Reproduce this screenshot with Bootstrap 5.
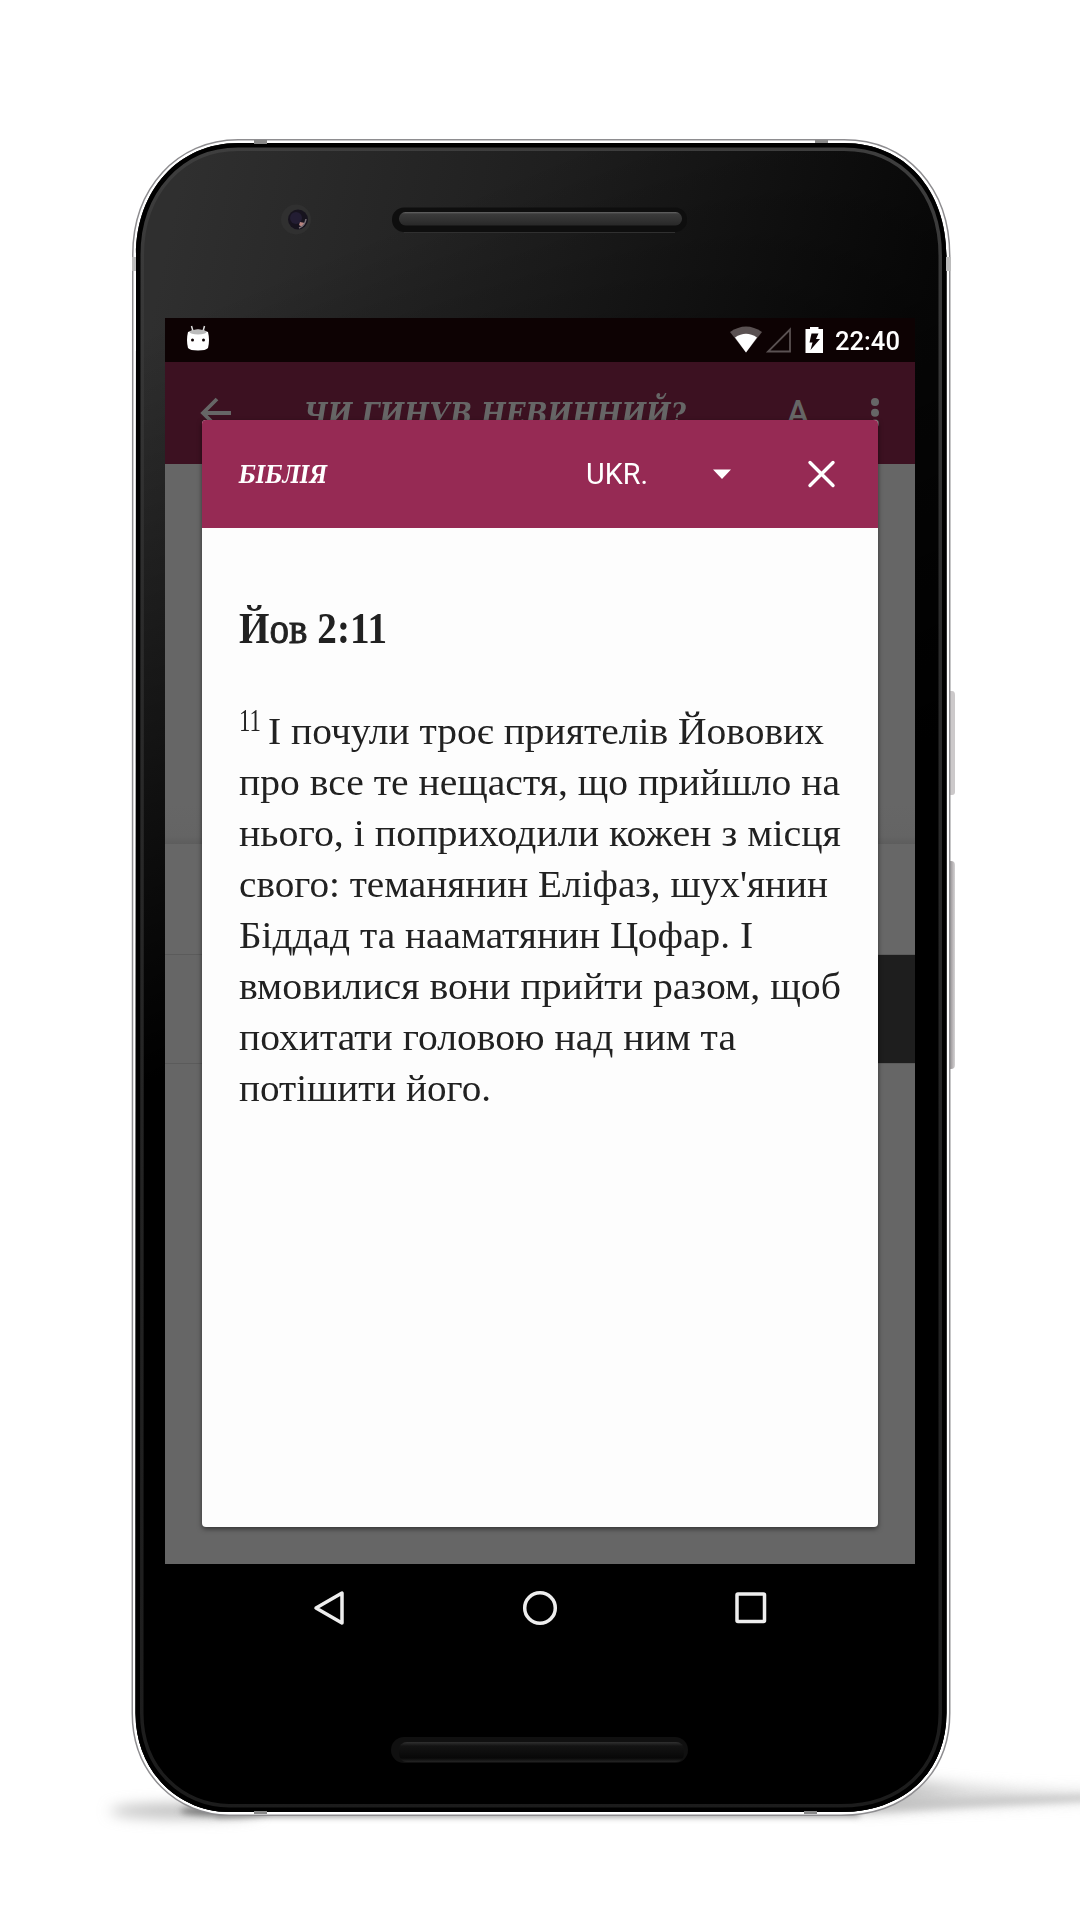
<!DOCTYPE html>
<html lang="uk">
<head>
<meta charset="utf-8">
<meta name="viewport" content="width=device-width, initial-scale=1">
<title>Біблія</title>
<link href="https://cdn.jsdelivr.net/npm/bootstrap@5.3.0/dist/css/bootstrap.min.css" rel="stylesheet">
<style>
body{background:#fff;margin:0}
.stage{width:1080px;height:1920px;padding:138px 0 0 132px}
.shell{left:0;top:0}
.phone{width:817px;height:1677px;padding:180px 34px 0 33px}
.display{width:750px;height:1246px;background:#666}
.status{height:44px;background:#0d0203;padding:1px 15px 0 21px}
.clock{font:500 26px/44px Roboto,sans-serif;color:#fff;white-space:nowrap;margin-left:10px}
.appbar{height:102px;background:#3c1121;color:#666}
.ttl{font-family:"DejaVu Serif Condensed","DejaVu Serif",serif;font-stretch:condensed;font-weight:700;font-style:italic;white-space:nowrap}
.appbar .ttl{font-size:32px;line-height:105px;width:382px;margin-left:73px}
.fmt{font:500 33px/101px Roboto,sans-serif;width:21px;margin-left:101px}
.band{height:110px}
.hero{height:380px;background:linear-gradient(#666 0,#666 340px,#646464 372px,#5d5d5d)}
.band-a{background:#676767}
.band-b{border-top:1px solid #5b5b5b;border-bottom:1px solid #5b5b5b;background:linear-gradient(90deg,#666 50%,#1e1e1e 50%)}
.popup{left:37px;top:102px;width:676px;height:1107px;background:#fdfdfd;border-radius:4px;box-shadow:0 2px 5px rgba(0,0,0,.5);overflow:hidden}
.popbar{height:108px;background:#962a54;color:#fff;padding:0 41px 0 37px}
.popbar .ttl{font-size:25px;width:87px;padding-top:2px}
.lang{font:400 29px/109px Roboto,sans-serif;width:61px;margin-left:260px;white-space:nowrap}
.reading{padding:72px 36px 0 37px;color:#212121;font-family:"Liberation Serif",serif}
.verse-title{font-size:45px;line-height:56px;margin:0 0 50px;font-weight:700;white-space:nowrap}
.verse-title .thin{font-weight:400;-webkit-text-stroke:.9px #212121}
.verse{font-size:37.5px;line-height:51px;margin:0}
.ln{display:block;height:51px;white-space:nowrap}
.num{font-size:31px;position:relative;top:-13px;line-height:1;display:inline-block;width:29px}
.fit{display:inline-block;transform-origin:0 50%}
.keys{height:88px;padding:0 148px}
</style>
<script src="https://cdn.jsdelivr.net/npm/bootstrap@5.3.0/dist/js/bootstrap.bundle.min.js"></script>
</head>
<body>
<main class="stage position-relative overflow-hidden">
<svg class="shell position-absolute" width="1080" height="1920" viewBox="0 0 1080 1920">
<defs>
<linearGradient id="face" gradientUnits="userSpaceOnUse" x1="180" y1="180" x2="930" y2="340"><stop offset="0" stop-color="#2f2f2f"/><stop offset=".5" stop-color="#1e1e1e"/><stop offset="1" stop-color="#0a0a0a"/></linearGradient>
<linearGradient id="fade" gradientUnits="userSpaceOnUse" x1="145" y1="333" x2="420" y2="963"><stop offset="0" stop-color="#000" stop-opacity="0"/><stop offset="1" stop-color="#000"/></linearGradient>
<linearGradient id="ring" x1="0" y1="0" x2="0" y2="1"><stop offset="0" stop-color="#3e3e3e"/><stop offset=".3" stop-color="#2b2b2b"/><stop offset="1" stop-color="#1c1c1c"/></linearGradient>
<linearGradient id="grille" x1="0" y1="0" x2="0" y2="1"><stop offset="0" stop-color="#666"/><stop offset=".15" stop-color="#3b3b3b"/><stop offset="1" stop-color="#282828"/></linearGradient>
<linearGradient id="grille2" x1="0" y1="0" x2="0" y2="1"><stop offset="0" stop-color="#303030"/><stop offset=".2" stop-color="#131313"/><stop offset=".8" stop-color="#080808"/><stop offset="1" stop-color="#242424"/></linearGradient>
<linearGradient id="key" x1="0" y1="0" x2="1" y2="0"><stop offset="0" stop-color="#77757a"/><stop offset=".5" stop-color="#aaa6a8"/><stop offset="1" stop-color="#d5d3d4"/></linearGradient>
<linearGradient id="cast" x1="0" y1="0" x2="1" y2="0"><stop offset="0" stop-color="#999"/><stop offset=".4" stop-color="#ccc"/><stop offset="1" stop-color="#d8d8d8"/></linearGradient>
<filter id="b6" x="-30%" y="-150%" width="160%" height="400%"><feGaussianBlur stdDeviation="7"/></filter>
<filter id="b3" x="-30%" y="-100%" width="160%" height="300%"><feGaussianBlur stdDeviation="3"/></filter>
<path id="body" d="M238 143H844C905 143 946.500 190 946.500 256V1713C946.500 1773 903 1812 841 1812H229C180 1812 135.500 1773 135.500 1713L136 255C136 190 179 143 238 143Z"/>
<clipPath id="inside"><use href="#body"/></clipPath>
</defs>
<ellipse cx="185" cy="1811" rx="75" ry="7" fill="#bbb" filter="url(#b6)"/>
<ellipse cx="225" cy="1811" rx="45" ry="5" fill="#777" filter="url(#b3)"/>
<path d="M215 1810H860V1817H215Z" fill="#999" filter="url(#b3)"/>
<path d="M860 1780C930 1775 960 1791 1120 1791V1800L860 1812Z" fill="url(#cast)" filter="url(#b6)" opacity=".7"/>
<path d="M880 1800L1120 1793V1800L860 1813Z" fill="#bbb" filter="url(#b3)" opacity=".6"/>
<path d="M948 691h4q3 0 3 4v97q0 3-3 3h-4z" fill="#ccc9ca"/>
<path d="M948 861h3q4 0 4 4v200q0 4-4 4h-3z" fill="url(#key)"/>
<use href="#body" fill="none" stroke="#8e8d90" stroke-width="8"/>
<use href="#body" fill="none" stroke="#fff" stroke-width="5"/>
<g clip-path="url(#inside)">
<use href="#body" fill="url(#face)"/>
<use href="#body" fill="url(#fade)"/>
<use href="#body" fill="none" stroke="url(#ring)" stroke-width="16"/>
<use href="#body" fill="none" stroke="#000" stroke-width="9"/>
</g>
<path d="M254 140v4h13v-4zM815 140v3h13v-3zM254 1811v3h13v-3zM804 1811v3h13v-3z" fill="#888"/>
<path d="M132 257h4v14h-4zM946 257h5v14h-5z" fill="#bbb"/>
<circle cx="296" cy="219.500" r="15" fill="#303030"/><circle cx="298" cy="219.500" r="10" fill="#17131e"/><circle cx="296" cy="218" r="6" fill="#231d33"/><path d="M300 222l5 1-3 4-3-2z" fill="#b88480"/><path d="M306 219q-1 7-7 9" stroke="#776e75" fill="none" stroke-width="1.500"/>
<rect x="392" y="207.500" width="295" height="24.500" rx="12" fill="#0e0e0e"/><path d="M404 232.500H675" stroke="#303030"/>
<rect x="399" y="212" width="283" height="13.500" rx="6.500" fill="url(#grille)"/>
<rect x="391" y="1737" width="297" height="26" rx="13" fill="#101010"/><rect x="399" y="1742" width="285" height="20" rx="8" fill="url(#grille2)"/>
</svg>

<div class="phone position-relative">
 <div class="display position-relative d-flex flex-column">
  <div class="status d-flex align-items-center">
   <svg width="24" height="44" viewBox="0 0 24 44"><path d="M5.500 7l2 7M18.500 7l-2 7" stroke="#ddd" stroke-width="1.500"/><path d="M2 13Q12 8 22 13Q24 21 22 29Q20 31.500 12 31.500Q4 31.500 2 29Q0 21 2 13Z" fill="#fff"/><ellipse cx="12" cy="13" rx="8.500" ry="2.500" fill="#bbb"/><circle cx="6.500" cy="21" r="1.500" fill="#0d0203"/><circle cx="17.500" cy="21" r="1.500" fill="#0d0203"/></svg>
   <svg class="ms-auto flex-shrink-0" width="95" height="44" viewBox="0 0 95 44"><path d="M0 13Q16 2 32 13L16 33.500Z" fill="#5a5152"/><path d="M5 18.500Q16 11 27 18.500L16 33.500Z" fill="#fff"/><path d="M60 10.500V32.500H38Z" fill="none" stroke="#5a5152" stroke-width="1.800"/><path d="M80 8h8.500v2h4.500v24h-17.500V10h4.500z" fill="#fff"/><path d="M81.500 14.500h7l-2.500 5.500h4L80.500 31l2-7.500h-3z" fill="#0d0203"/></svg>
   <span class="clock flex-shrink-0"><span class="fit" data-w="65">22:40</span></span>
  </div>
  <div class="appbar d-flex align-items-start">
   <svg width="66" height="102" viewBox="0 0 66 102" class="flex-shrink-0"><path d="M66 51H39M52 37L38 51L52 65" fill="none" stroke="#666" stroke-width="3.800"/></svg>
   <span class="ttl flex-shrink-0"><span class="fit" data-w="382">ЧИ ГИНУВ НЕВИННИЙ?</span></span>
   <span class="fmt flex-shrink-0">А</span>
   <svg class="flex-shrink-0" width="106" height="102" viewBox="0 0 106 102"><g fill="#666"><circle cx="67" cy="40" r="4"/><circle cx="67" cy="50.700" r="4"/><circle cx="67" cy="61.500" r="4"/></g></svg>
  </div>
  <div class="hero"></div><div class="band band-a"></div><div class="band band-b"></div>
  <section class="popup position-absolute">
   <header class="popbar d-flex align-items-center">
    <span class="ttl"><span class="fit" data-w="88">БІБЛІЯ</span></span>
    <span class="lang"><span class="fit" data-w="62">UKR.</span></span>
    <svg class="ms-auto" width="124" height="34" viewBox="0 0 124 34"><path d="M0 12.500H18L9 22Z" fill="#fff"/><path d="M97 5.500L120 28.500M120 5.500L97 28.500" stroke="#fff" stroke-width="3.400" stroke-linecap="round"/></svg>
   </header>
   <article class="reading">
    <h1 class="verse-title"><span class="fit" data-w="148">Й<span class="thin">ов</span> 2:11</span></h1>
    <p class="verse"><span class="ln"><span class="num"><span class="fit" data-w="22">11</span></span><span class="fit" data-w="556">І почули троє приятелів Йовових</span></span>
    <span class="ln"><span class="fit" data-w="601">про все те нещастя, що прийшло на</span></span>
    <span class="ln"><span class="fit" data-w="602">нього, і поприходили кожен з місця</span></span>
    <span class="ln"><span class="fit" data-w="589">свого: теманянин Еліфаз, шух'янин</span></span>
    <span class="ln"><span class="fit" data-w="514">Біддад та нааматянин Цофар. І</span></span>
    <span class="ln"><span class="fit" data-w="602">вмовилися вони прийти разом, щоб</span></span>
    <span class="ln"><span class="fit" data-w="497">похитати головою над ним та</span></span>
    <span class="ln"><span class="fit" data-w="252">потішити його.</span></span></p>
   </article>
  </section>
 </div>
 <nav class="keys d-flex justify-content-between align-items-center">
  <svg width="32" height="40" viewBox="0 0 32 40"><path d="M29 5V35L3 20Z" fill="none" stroke="#eee" stroke-width="3.500" stroke-linejoin="round"/></svg>
  <svg width="36" height="40" viewBox="0 0 36 40"><circle cx="18" cy="20" r="15.300" fill="none" stroke="#eee" stroke-width="3.500"/></svg>
  <svg width="32" height="40" viewBox="0 0 32 40"><rect x="2" y="6" width="27.500" height="27.500" rx="1" fill="none" stroke="#eee" stroke-width="3.500"/></svg>
 </nav>
</div>
</main>
<script>
// Scale each line horizontally to its measure.
const lines = [...document.querySelectorAll('.fit')].map(el => [el, el.getBoundingClientRect().width]);
lines.forEach(([el, w]) => {
  el.style.transform = 'scaleX(' + (el.dataset.w / w).toFixed(4) + ')';
  el.style.marginRight = (el.dataset.w - w).toFixed(2) + 'px';
});
</script>
</body>
</html>
